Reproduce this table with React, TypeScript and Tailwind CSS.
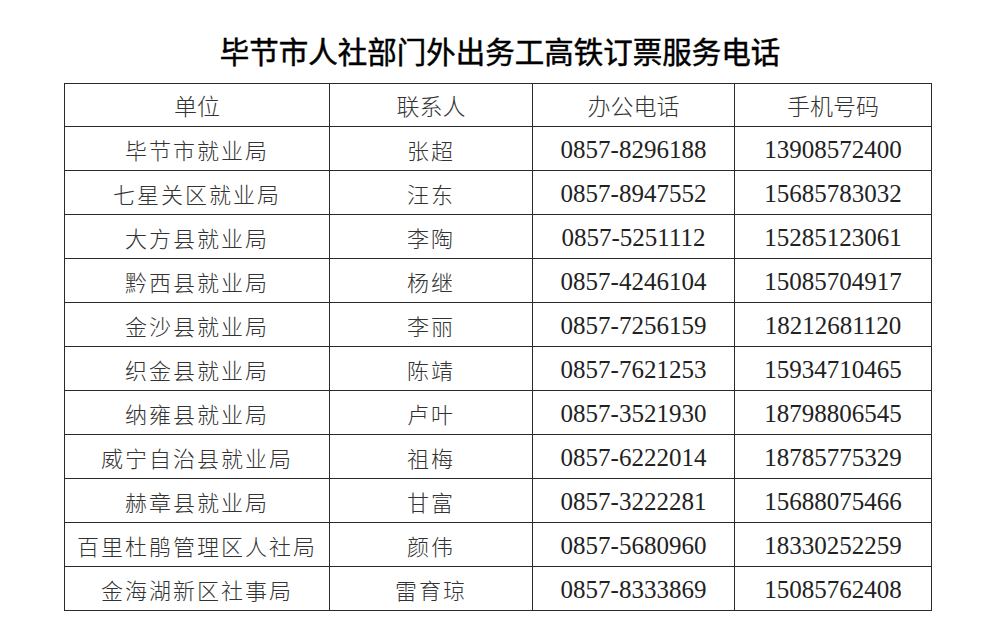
import React from "react";

const rows = [
  { unit: "毕节市就业局", name: "张超", office: "0857-8296188", mobile: "13908572400" },
  { unit: "七星关区就业局", name: "汪东", office: "0857-8947552", mobile: "15685783032" },
  { unit: "大方县就业局", name: "李陶", office: "0857-5251112", mobile: "15285123061" },
  { unit: "黔西县就业局", name: "杨继", office: "0857-4246104", mobile: "15085704917" },
  { unit: "金沙县就业局", name: "李丽", office: "0857-7256159", mobile: "18212681120" },
  { unit: "织金县就业局", name: "陈靖", office: "0857-7621253", mobile: "15934710465" },
  { unit: "纳雍县就业局", name: "卢叶", office: "0857-3521930", mobile: "18798806545" },
  { unit: "威宁自治县就业局", name: "祖梅", office: "0857-6222014", mobile: "18785775329" },
  { unit: "赫章县就业局", name: "甘富", office: "0857-3222281", mobile: "15688075466" },
  { unit: "百里杜鹃管理区人社局", name: "颜伟", office: "0857-5680960", mobile: "18330252259" },
  { unit: "金海湖新区社事局", name: "雷育琼", office: "0857-8333869", mobile: "15085762408" },
];

const headers = ["单位", "联系人", "办公电话", "手机号码"];

const cjk = "font-['Noto_Sans_CJK_SC',sans-serif]";
const num = "font-['Liberation_Serif',serif]";

export default function App() {
  return (
    <div className="min-h-[629px] w-[1000px] bg-white pt-[30px]">
      {/* Title */}
      <h1
        className={`${cjk} h-[40px] text-center text-[29.5px] font-normal leading-[40px] text-black [-webkit-text-stroke:0.5px_black]`}
      >
        毕节市人社部门外出务工高铁订票服务电话
      </h1>

      {/* Table */}
      <table className="ml-[64px] mt-[13px] w-[867px] table-fixed border-collapse text-[#222]">
        <colgroup>
          <col className="w-[265px]" />
          <col className="w-[203px]" />
          <col className="w-[202px]" />
          <col className="w-[197px]" />
        </colgroup>
        <thead>
          <tr className="h-[43px]">
            {headers.map((h) => (
              <th
                key={h}
                className={`${cjk} border border-[#2a2a2a] p-0 text-center text-[23px] font-light leading-none text-[#333]`}
              >
                {h}
              </th>
            ))}
          </tr>
        </thead>
        <tbody>
          {rows.map((r) => (
            <tr key={r.unit} className="h-[44px]">
              <td
                className={`${cjk} whitespace-nowrap border border-[#2a2a2a] p-0 text-center text-[22px] font-light leading-none tracking-[2px] text-[#333]`}
              >
                {r.unit}
              </td>
              <td
                className={`${cjk} border border-[#2a2a2a] p-0 text-center text-[22px] font-light leading-none tracking-[2px] text-[#333]`}
              >
                {r.name}
              </td>
              <td
                className={`${num} border border-[#2a2a2a] p-0 pt-[2px] text-center text-[25px] leading-none`}
              >
                {r.office}
              </td>
              <td
                className={`${num} border border-[#2a2a2a] p-0 pt-[2px] text-center text-[25px] leading-none`}
              >
                {r.mobile}
              </td>
            </tr>
          ))}
        </tbody>
      </table>
    </div>
  );
}
